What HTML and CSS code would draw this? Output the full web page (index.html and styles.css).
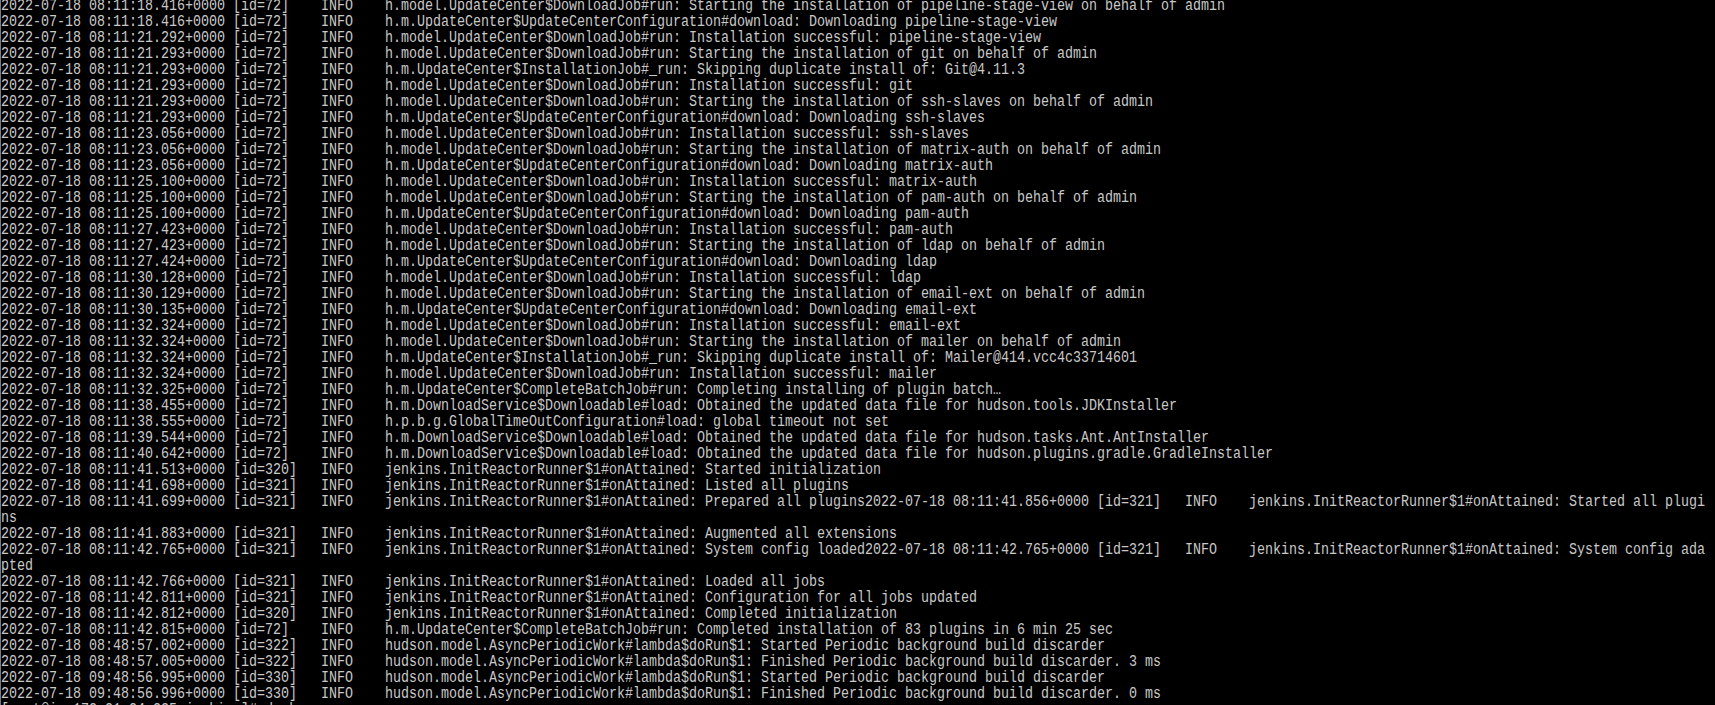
FILE: index.html
```html
<!DOCTYPE html>
<html lang="en">

<head>
  <meta charset="UTF-8" />
  <meta name="viewport" content="width=device-width, initial-scale=1.0" />
  <title>jenkins - docker logs</title>
  <link rel="stylesheet" href="styles.css">
</head>

<body>
  <div class="console">
    <!-- tabs are real tab characters, tab-size 8 like the console -->
    <pre class="log">2022-07-18 08:11:18.416+0000 [id=72]	INFO	h.model.UpdateCenter$DownloadJob#run: Starting the installation of pipeline-stage-view on behalf of admin
2022-07-18 08:11:18.416+0000 [id=72]	INFO	h.m.UpdateCenter$UpdateCenterConfiguration#download: Downloading pipeline-stage-view
2022-07-18 08:11:21.292+0000 [id=72]	INFO	h.model.UpdateCenter$DownloadJob#run: Installation successful: pipeline-stage-view
2022-07-18 08:11:21.293+0000 [id=72]	INFO	h.model.UpdateCenter$DownloadJob#run: Starting the installation of git on behalf of admin
2022-07-18 08:11:21.293+0000 [id=72]	INFO	h.m.UpdateCenter$InstallationJob#_run: Skipping duplicate install of: Git@4.11.3
2022-07-18 08:11:21.293+0000 [id=72]	INFO	h.model.UpdateCenter$DownloadJob#run: Installation successful: git
2022-07-18 08:11:21.293+0000 [id=72]	INFO	h.model.UpdateCenter$DownloadJob#run: Starting the installation of ssh-slaves on behalf of admin
2022-07-18 08:11:21.293+0000 [id=72]	INFO	h.m.UpdateCenter$UpdateCenterConfiguration#download: Downloading ssh-slaves
2022-07-18 08:11:23.056+0000 [id=72]	INFO	h.model.UpdateCenter$DownloadJob#run: Installation successful: ssh-slaves
2022-07-18 08:11:23.056+0000 [id=72]	INFO	h.model.UpdateCenter$DownloadJob#run: Starting the installation of matrix-auth on behalf of admin
2022-07-18 08:11:23.056+0000 [id=72]	INFO	h.m.UpdateCenter$UpdateCenterConfiguration#download: Downloading matrix-auth
2022-07-18 08:11:25.100+0000 [id=72]	INFO	h.model.UpdateCenter$DownloadJob#run: Installation successful: matrix-auth
2022-07-18 08:11:25.100+0000 [id=72]	INFO	h.model.UpdateCenter$DownloadJob#run: Starting the installation of pam-auth on behalf of admin
2022-07-18 08:11:25.100+0000 [id=72]	INFO	h.m.UpdateCenter$UpdateCenterConfiguration#download: Downloading pam-auth
2022-07-18 08:11:27.423+0000 [id=72]	INFO	h.model.UpdateCenter$DownloadJob#run: Installation successful: pam-auth
2022-07-18 08:11:27.423+0000 [id=72]	INFO	h.model.UpdateCenter$DownloadJob#run: Starting the installation of ldap on behalf of admin
2022-07-18 08:11:27.424+0000 [id=72]	INFO	h.m.UpdateCenter$UpdateCenterConfiguration#download: Downloading ldap
2022-07-18 08:11:30.128+0000 [id=72]	INFO	h.model.UpdateCenter$DownloadJob#run: Installation successful: ldap
2022-07-18 08:11:30.129+0000 [id=72]	INFO	h.model.UpdateCenter$DownloadJob#run: Starting the installation of email-ext on behalf of admin
2022-07-18 08:11:30.135+0000 [id=72]	INFO	h.m.UpdateCenter$UpdateCenterConfiguration#download: Downloading email-ext
2022-07-18 08:11:32.324+0000 [id=72]	INFO	h.model.UpdateCenter$DownloadJob#run: Installation successful: email-ext
2022-07-18 08:11:32.324+0000 [id=72]	INFO	h.model.UpdateCenter$DownloadJob#run: Starting the installation of mailer on behalf of admin
2022-07-18 08:11:32.324+0000 [id=72]	INFO	h.m.UpdateCenter$InstallationJob#_run: Skipping duplicate install of: Mailer@414.vcc4c33714601
2022-07-18 08:11:32.324+0000 [id=72]	INFO	h.model.UpdateCenter$DownloadJob#run: Installation successful: mailer
2022-07-18 08:11:32.325+0000 [id=72]	INFO	h.m.UpdateCenter$CompleteBatchJob#run: Completing installing of plugin batch…
2022-07-18 08:11:38.455+0000 [id=72]	INFO	h.m.DownloadService$Downloadable#load: Obtained the updated data file for hudson.tools.JDKInstaller
2022-07-18 08:11:38.555+0000 [id=72]	INFO	h.p.b.g.GlobalTimeOutConfiguration#load: global timeout not set
2022-07-18 08:11:39.544+0000 [id=72]	INFO	h.m.DownloadService$Downloadable#load: Obtained the updated data file for hudson.tasks.Ant.AntInstaller
2022-07-18 08:11:40.642+0000 [id=72]	INFO	h.m.DownloadService$Downloadable#load: Obtained the updated data file for hudson.plugins.gradle.GradleInstaller
2022-07-18 08:11:41.513+0000 [id=320]	INFO	jenkins.InitReactorRunner$1#onAttained: Started initialization
2022-07-18 08:11:41.698+0000 [id=321]	INFO	jenkins.InitReactorRunner$1#onAttained: Listed all plugins
2022-07-18 08:11:41.699+0000 [id=321]	INFO	jenkins.InitReactorRunner$1#onAttained: Prepared all plugins2022-07-18 08:11:41.856+0000 [id=321]   INFO    jenkins.InitReactorRunner$1#onAttained: Started all plugi
ns
2022-07-18 08:11:41.883+0000 [id=321]	INFO	jenkins.InitReactorRunner$1#onAttained: Augmented all extensions
2022-07-18 08:11:42.765+0000 [id=321]	INFO	jenkins.InitReactorRunner$1#onAttained: System config loaded2022-07-18 08:11:42.765+0000 [id=321]   INFO    jenkins.InitReactorRunner$1#onAttained: System config ada
pted
2022-07-18 08:11:42.766+0000 [id=321]	INFO	jenkins.InitReactorRunner$1#onAttained: Loaded all jobs
2022-07-18 08:11:42.811+0000 [id=321]	INFO	jenkins.InitReactorRunner$1#onAttained: Configuration for all jobs updated
2022-07-18 08:11:42.812+0000 [id=320]	INFO	jenkins.InitReactorRunner$1#onAttained: Completed initialization
2022-07-18 08:11:42.815+0000 [id=72]	INFO	h.m.UpdateCenter$CompleteBatchJob#run: Completed installation of 83 plugins in 6 min 25 sec
2022-07-18 08:48:57.002+0000 [id=322]	INFO	hudson.model.AsyncPeriodicWork#lambda$doRun$1: Started Periodic background build discarder
2022-07-18 08:48:57.005+0000 [id=322]	INFO	hudson.model.AsyncPeriodicWork#lambda$doRun$1: Finished Periodic background build discarder. 3 ms
2022-07-18 09:48:56.995+0000 [id=330]	INFO	hudson.model.AsyncPeriodicWork#lambda$doRun$1: Started Periodic background build discarder
2022-07-18 09:48:56.996+0000 [id=330]	INFO	hudson.model.AsyncPeriodicWork#lambda$doRun$1: Finished Periodic background build discarder. 0 ms
[root@ip-172-21-24-225 jenkins]# docker ps</pre>
  </div>
</body>

</html>
```

FILE: styles.css
```css
html,
body {
  margin: 0;
  padding: 0;
  background-color: #000;
  overflow: hidden;
}

.console {
  height: 100vh;
  overflow: hidden;
  border-left: 1px solid #7a7a7a;
  background-color: #000;
}

/* console cell is 8x16 px, so squeeze a 16px mono font sideways */
.log {
  margin: -2px 0 0 0;
  width: 2048px;
  font-family: "Liberation Mono", "DejaVu Sans Mono", monospace;
  font-size: 16px;
  line-height: 16px;
  color: #c8c8c8;
  white-space: pre;
  tab-size: 8;
  transform: scaleX(0.8332);
  transform-origin: 0 0;
}
```
